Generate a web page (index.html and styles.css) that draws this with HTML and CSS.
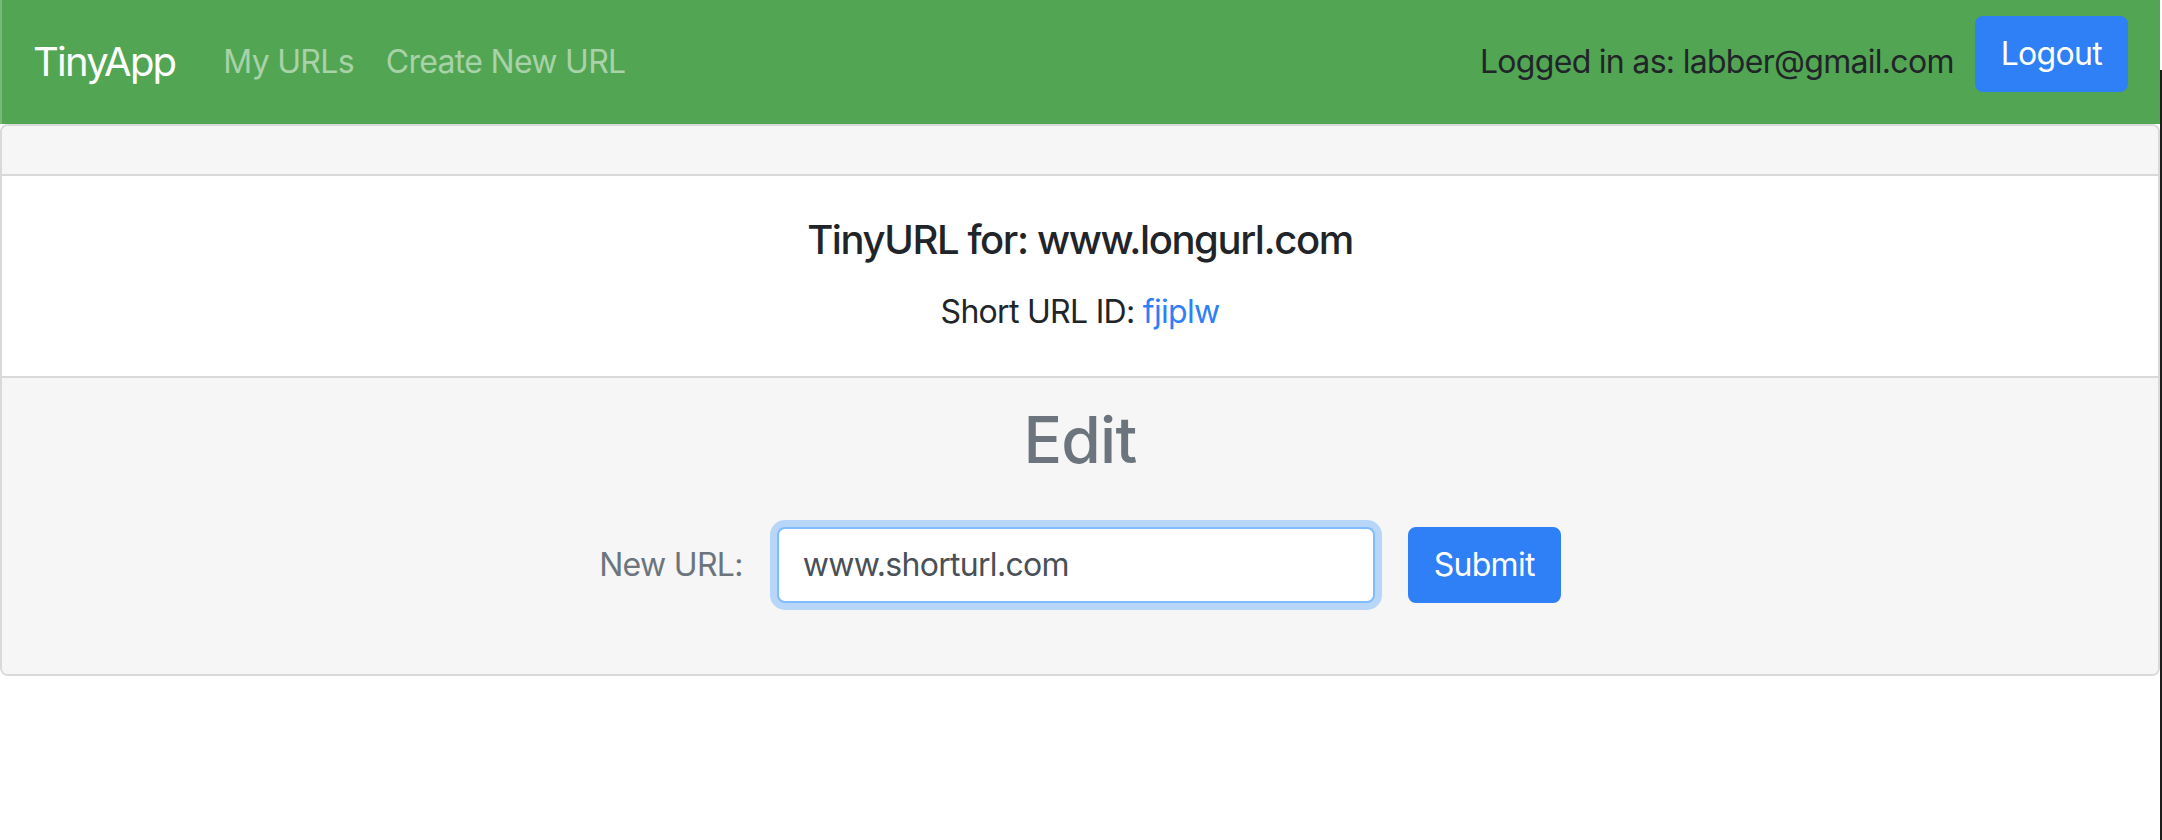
FILE: index.html
```html
<!DOCTYPE html>
<html lang="en">
<head>
<meta charset="utf-8">
<title>TinyApp</title>
<link rel="stylesheet" href="styles.css">
</head>
<body>
<div class="page">
  <nav class="navbar">
    <a class="brand" href="#">TinyApp</a>
    <div class="nav-links">
      <a class="nav-link" href="#">My URLs</a>
      <a class="nav-link" href="#">Create New URL</a>
    </div>
    <div class="nav-right">
      <span class="login-info">Logged in as: labber@gmail.com</span>
      <button class="btn btn-primary btn-logout" type="button">Logout</button>
    </div>
  </nav>
  <main class="card">
    <div class="card-header"></div>
    <div class="card-body">
      <h5 class="card-title">TinyURL for: www.longurl.com</h5>
      <p class="card-text">Short URL ID: <a class="link" href="#">fjiplw</a></p>
    </div>
    <div class="card-footer">
      <h2 class="edit-title">Edit</h2>
      <form class="edit-form">
        <label for="longURL" class="form-label">New URL:</label>
        <input id="longURL" class="form-control is-focused" type="text" value="www.shorturl.com" autofocus>
        <button class="btn btn-primary btn-submit" type="submit">Submit</button>
      </form>
    </div>
  </main>
</div>
<div class="window-edge"></div>
</body>
</html>
```
FILE: styles.css
```css
* {
  box-sizing: border-box;
}

html,
body {
  margin: 0;
  background: #ffffff;
}

body {
  font-family: Inter, "Noto Sans", "Liberation Sans", sans-serif;
  font-size: 32px;
  line-height: 1.5;
  letter-spacing: -0.022em;
  color: #212529;
}

.page {
  width: 2160px;
}

.navbar {
  display: flex;
  align-items: center;
  height: 124px;
  padding: 0 32px 0 31px;
  background: #52a552;
  border-left: 2px solid rgba(255, 255, 255, 0.22);
}

.brand {
  font-size: 40px;
  line-height: 60px;
  letter-spacing: -0.045em;
  color: #ffffff;
  text-decoration: none;
  margin-right: 32px;
}

.nav-links {
  display: flex;
}

.nav-link {
  padding: 0 16px;
  color: rgba(255, 255, 255, 0.5);
  text-decoration: none;
}

.nav-right {
  margin-left: auto;
  display: flex;
  align-items: center;
}

.login-info {
  margin-right: 21px;
  color: #212529;
}

.btn {
  font-family: inherit;
  font-size: 32px;
  line-height: 48px;
  letter-spacing: -0.022em;
  padding: 12px 24px;
  border: 2px solid transparent;
  border-radius: 8px;
  cursor: pointer;
}

.btn-primary {
  background: #2f7ff6;
  border-color: #2f7ff6;
  color: #ffffff;
}

.btn-logout {
  margin-bottom: 16px;
}

.card {
  display: block;
  background: #ffffff;
  border: 2px solid #d9d9d9;
  border-radius: 8px;
  overflow: hidden;
}

.card-header {
  height: 50px;
  background: #f6f6f6;
  border-bottom: 2px solid #d9d9d9;
}

.card-body {
  padding: 40px;
  text-align: center;
}

.card-title {
  font-size: 40px;
  font-weight: 500;
  line-height: 1.2;
  letter-spacing: -0.035em;
  margin: 0 0 24px;
}

.card-text {
  margin: 0;
}

.link {
  color: #2f7ff6;
  text-decoration: none;
}

.card-footer {
  background: #f6f6f6;
  border-top: 2px solid #d9d9d9;
  padding: 24px 40px;
  text-align: center;
}

.edit-title {
  font-size: 64px;
  font-weight: 500;
  line-height: 1.2;
  color: #6c757d;
  margin: 0;
}

.edit-form {
  display: flex;
  justify-content: center;
  align-items: center;
  margin: 48px 0 47px;
}

.form-label {
  color: #6c757d;
  margin-right: 34px;
}

.form-control {
  width: 598px;
  height: 76px;
  padding: 12px 24px;
  font-family: inherit;
  font-size: 32px;
  letter-spacing: -0.022em;
  color: #495057;
  background: #ffffff;
  border: 2px solid #ced4da;
  border-radius: 8px;
  outline: none;
  caret-color: #212529;
}

.form-control.is-focused {
  border-color: #80bdff;
  box-shadow: 0 0 0 7px rgba(0, 123, 255, 0.25);
}

.btn-submit {
  margin-left: 33px;
}

.window-edge {
  position: fixed;
  top: 70px;
  right: 0;
  bottom: 0;
  width: 2px;
  background: #1c1c1c;
}
```
